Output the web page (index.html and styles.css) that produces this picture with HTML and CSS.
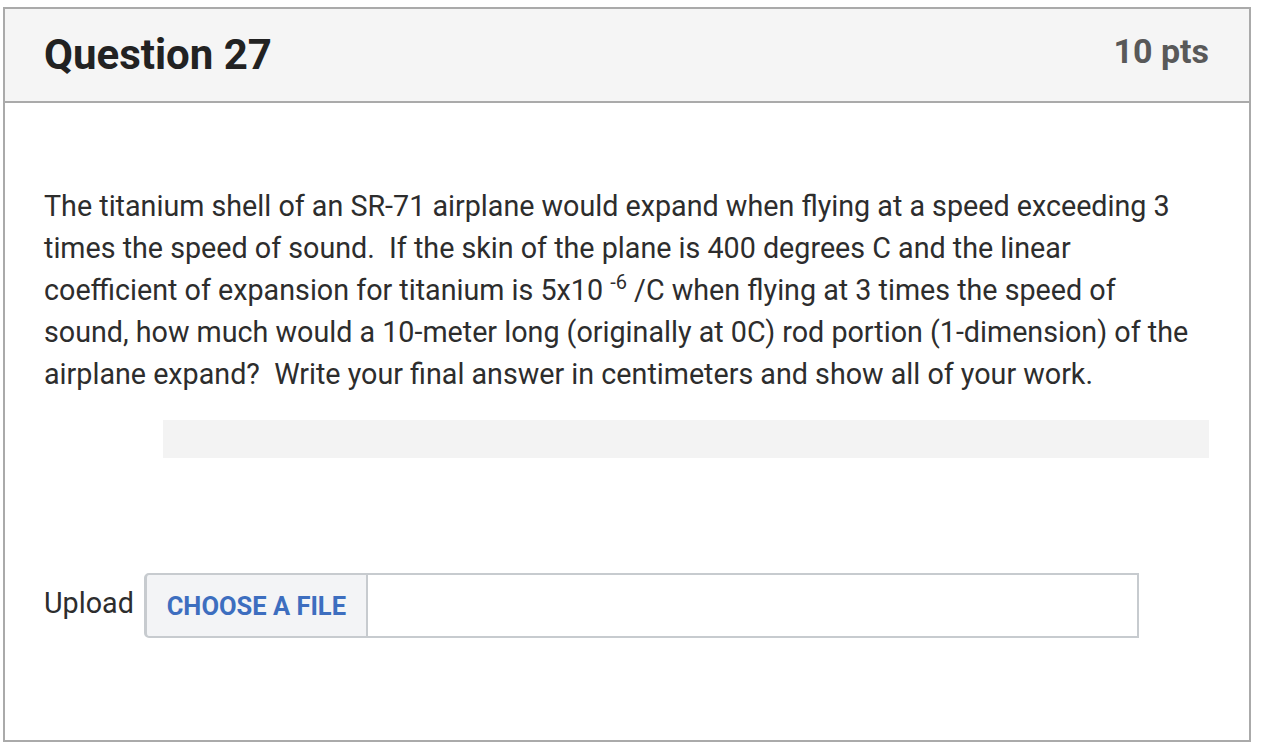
FILE: index.html
```
<!DOCTYPE html>
<html>
<head>
<meta charset="utf-8">
<link rel="stylesheet" href="styles.css">
</head>
<body>
<div class="question">
  <div class="header">
    <h2 class="title">Question 27</h2>
    <div class="pts">10 pts</div>
  </div>
  <div class="body">
    <p class="text">The titanium shell of an SR-71 airplane would expand when flying at a speed exceeding 3 times the speed of sound.&nbsp; If the skin of the plane is 400 degrees C and the linear coefficient of expansion for titanium is 5x10 <sup>-6</sup> /C when flying at 3 times the speed of sound, how much would a 10-meter long (originally at 0C) rod portion (1-dimension) of the airplane expand?&nbsp; Write your final answer in centimeters and show all of your work.</p>
    <div class="bar"></div>
    <div class="upload">
      <span class="label">Upload</span>
      <div class="file">
        <span class="btn">CHOOSE A FILE</span>
        <span class="field"></span>
      </div>
    </div>
  </div>
</div>
</body>
</html>
```
FILE: styles.css
```
html, body {
  margin: 0;
  padding: 0;
  background: #fff;
}
body {
  font-family: Roboto, "Liberation Sans", sans-serif;
  color: #2d2d2d;
  padding: 7px 0 0 3px;
}
.question {
  width: 1244px;
  height: 731px;
  border: 2px solid #aaaaaa;
  display: flex;
  flex-direction: column;
}
.header {
  background: #f5f5f5;
  height: 92px;
  border-bottom: 2px solid #aaaaaa;
  display: flex;
  align-items: center;
  justify-content: space-between;
  padding: 0 40px 0 39px;
}
.title {
  margin: 0;
  font-size: 42px;
  font-weight: 700;
  color: #222;
  padding-bottom: 2px;
}
.pts {
  font-size: 34px;
  font-weight: 700;
  color: #595959;
  padding-bottom: 8px;
}
.body {
  padding: 82px 40px 0 39px;
}
.text {
  margin: 0;
  max-width: 1155px;
  font-size: 28.7px;
  line-height: 42px;
  color: #2d2d2d;
}
.text sup {
  display: inline-block;
  font-size: 20px;
  line-height: 20px;
  vertical-align: 11px;
}
.bar {
  margin: 25px 0 0 119px;
  height: 38px;
  background: #f3f3f3;
}
.upload {
  margin-top: 115px;
  display: flex;
  align-items: center;
  gap: 10px;
}
.label {
  font-size: 28.7px;
  color: #2d2d2d;
  padding-bottom: 6px;
}
.file {
  display: flex;
  height: 65px;
  width: 995px;
}
.btn {
  box-sizing: border-box;
  width: 224px;
  height: 65px;
  background: #f3f4f6;
  border: 2px solid #c7cbcf;
  border-left-width: 3px;
  border-radius: 5px 0 0 5px;
  display: flex;
  align-items: center;
  justify-content: center;
  font-size: 25.5px;
  font-weight: 700;
  color: #3d6ebf;
}
.field {
  box-sizing: border-box;
  flex: 1;
  height: 65px;
  border: 2px solid #c7cbcf;
  border-left: none;
}
```
